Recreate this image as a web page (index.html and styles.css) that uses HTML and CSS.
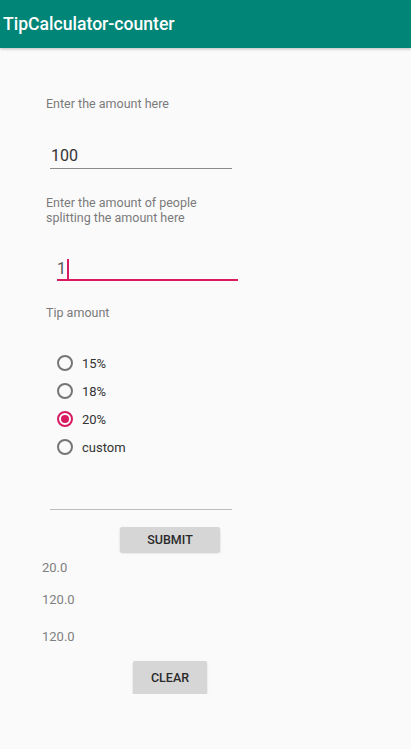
FILE: index.html
```html
<!DOCTYPE html>
<html>
<head>
<meta charset="utf-8">
<title>TipCalculator-counter</title>
<link rel="stylesheet" href="styles.css">
</head>
<body>
<header class="appbar">TipCalculator-counter</header>
<main class="content">
  <div class="label label-first">Enter the amount here</div>
  <div class="field field-amount">100</div>
  <div class="label label-people">Enter the amount of people splitting the amount here</div>
  <div class="field field-people focused"><span>1</span><span class="cursor"></span></div>
  <div class="label label-tip">Tip amount</div>
  <div class="radios">
    <div class="radio"><span class="dot"></span><span class="radio-text">15%</span></div>
    <div class="radio"><span class="dot"></span><span class="radio-text">18%</span></div>
    <div class="radio checked"><span class="dot"></span><span class="radio-text">20%</span></div>
    <div class="radio"><span class="dot"></span><span class="radio-text">custom</span></div>
  </div>
  <div class="field field-custom"></div>
  <button class="btn btn-submit">SUBMIT</button>
  <div class="result result-tip">20.0</div>
  <div class="result result-total">120.0</div>
  <div class="result result-each">120.0</div>
  <button class="btn btn-clear">CLEAR</button>
</main>
</body>
</html>
```

FILE: styles.css
```css
html, body {
  margin: 0;
  padding: 0;
  background: #fafafa;
  font-family: Roboto, "Noto Sans", sans-serif;
}
.appbar {
  height: 48px;
  background: #008577;
  color: #ffffff;
  font-weight: 500;
  font-size: 17.6px;
  line-height: 48px;
  padding-left: 3px;
  box-shadow: 0 1px 3px rgba(0,0,0,0.25);
}
.content {
  display: flex;
  flex-direction: column;
  align-items: flex-start;
}
.label {
  font-size: 12.5px;
  line-height: 14px;
  color: #7a7a7a;
  margin-left: 46px;
}
.label-first { margin-top: 49px; }
.label-people {
  margin-top: 26px;
  line-height: 15px;
  width: 180px;
}
.label-tip { margin-top: 25px; }
.field {
  font-size: 16px;
  line-height: 19px;
  color: #333333;
  box-sizing: content-box;
}
.field-amount {
  margin-top: 35px;
  margin-left: 50px;
  width: 181px;
  padding-left: 1px;
  padding-bottom: 3px;
  border-bottom: 1px solid #8a8a8a;
}
.field-people {
  margin-top: 34px;
  margin-left: 57px;
  width: 181px;
  height: 19px;
  padding-bottom: 1px;
  border-bottom: 2px solid #d81b60;
  display: flex;
  align-items: center;
  color: #555555;
}
.cursor {
  width: 2px;
  height: 20px;
  background: #d81b60;
  margin-left: 1px;
}
.radios {
  margin-top: 29px;
  margin-left: 57px;
  display: flex;
  flex-direction: column;
}
.radio {
  height: 28px;
  display: flex;
  align-items: center;
}
.dot {
  width: 12px;
  height: 12px;
  border: 2px solid #757575;
  border-radius: 50%;
  display: flex;
  align-items: center;
  justify-content: center;
}
.radio.checked .dot {
  border-color: #d81b60;
}
.radio.checked .dot::after {
  content: "";
  width: 8px;
  height: 8px;
  border-radius: 50%;
  background: #d81b60;
}
.radio-text {
  margin-left: 9px;
  font-size: 13px;
  color: #333333;
}
.field-custom {
  margin-top: 26px;
  margin-left: 50px;
  width: 182px;
  height: 22px;
  border-bottom: 1px solid #bdbdbd;
}
.btn {
  border: none;
  background: #d6d6d6;
  font-family: Roboto, "Noto Sans", sans-serif;
  font-weight: 500;
  font-size: 12.5px;
  color: #2a2a2a;
  border-radius: 2px;
  box-shadow: 0 1px 2px rgba(0,0,0,0.2);
  padding: 0;
}
.btn-submit {
  margin-top: 17px;
  margin-left: 120px;
  width: 100px;
  height: 25px;
}
.btn-clear {
  margin-top: 17px;
  margin-left: 133px;
  width: 74px;
  height: 33px;
}
.result {
  font-size: 13px;
  line-height: 15px;
  color: #808080;
  margin-left: 42px;
}
.result-tip { margin-top: 8px; }
.result-total { margin-top: 17px; }
.result-each { margin-top: 22px; }
```
